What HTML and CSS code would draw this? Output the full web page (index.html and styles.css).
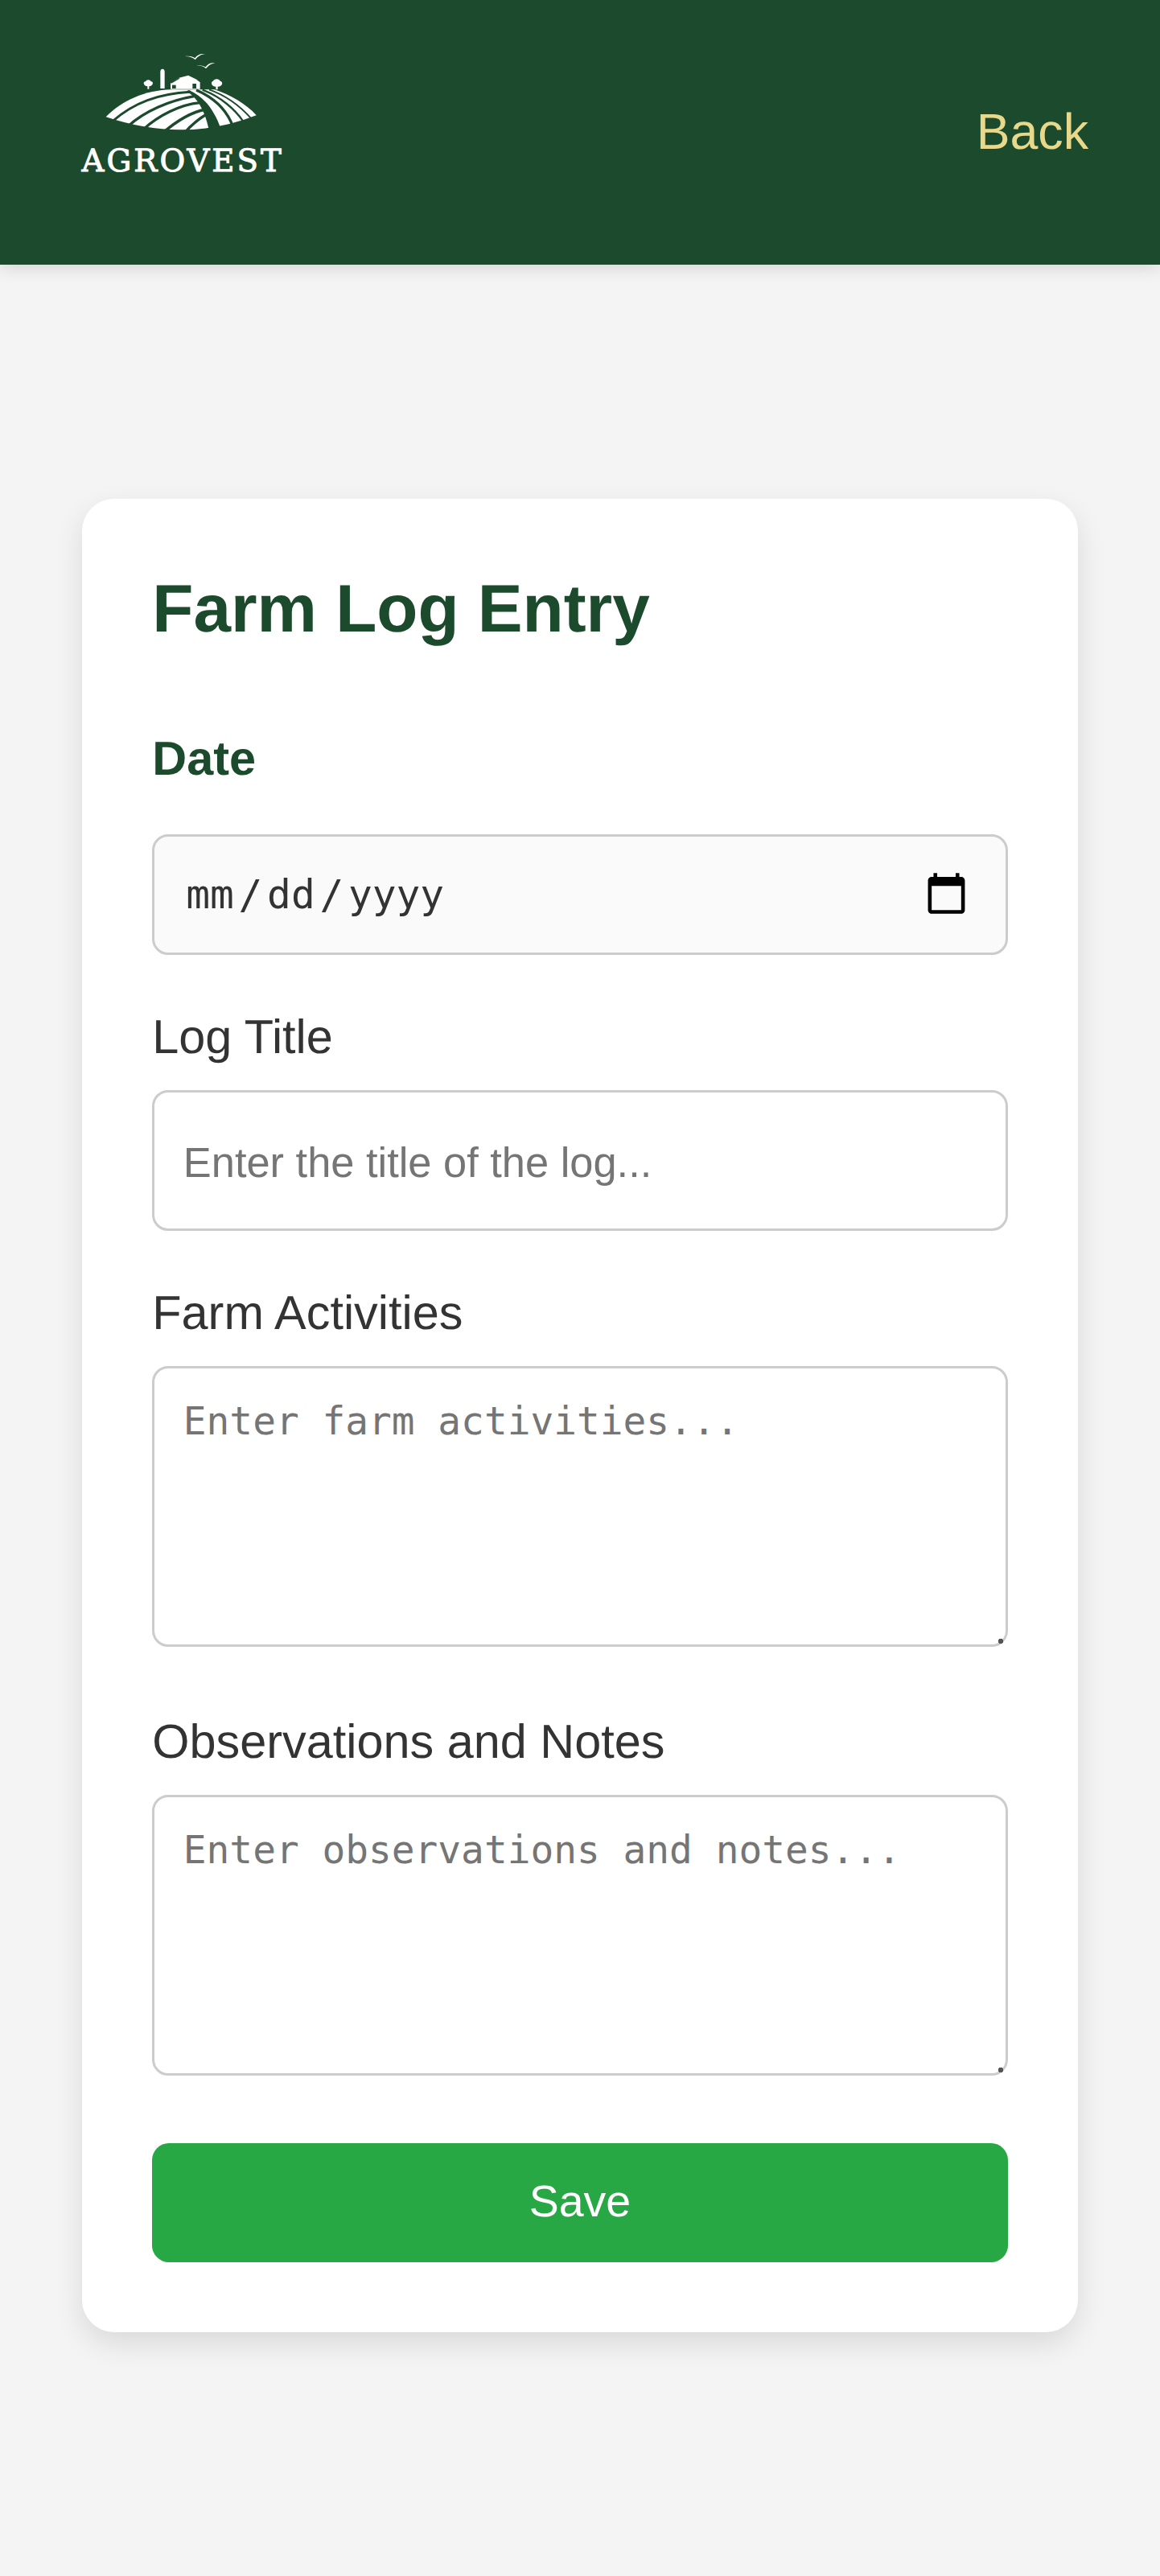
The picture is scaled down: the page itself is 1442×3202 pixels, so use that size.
FILE: index.html
```html
<!DOCTYPE html>
<html lang="en">
<head>
<meta charset="utf-8">
<title>Farm Log Entry</title>
<link rel="stylesheet" href="styles.css">
</head>
<body>
<header class="topbar">
  <svg class="logo" viewBox="0 0 870 540" role="img" aria-label="Agrovest">
    <g fill="#fff">
      <path d="M155 286C215 225 300 186 400 184L560 184C620 205 675 235 716 280Q450 385 155 286Z"/>
      <path d="M358 180V118Q358 108 366 107Q374 108 374 118V180Z"/>
      <path d="M396 160L428 140L462 131L490 145L506 157V182H396Z"/>
      <path d="M310 182V172C294 172 292 153 303 154C306 146 320 146 323 154C334 153 332 172 316 172V182Z"/>
      <path d="M565 184V173C548 173 544 154 555 152C558 142 578 142 581 152C594 154 590 173 572 173V184Z"/>
      <path d="M450 60C470 58 480 62 487 67C495 54 510 48 526 52C510 52 498 60 488 73C480 65 468 60 450 60Z"/>
      <path d="M492 94C510 92 520 96 527 100C535 88 548 82 562 86C548 86 537 94 528 106C520 98 510 95 492 94Z"/>
    </g>
    <g fill="none" stroke="#1c4a2c">
      <path stroke-width="9" d="M180 302C260 232 350 200 470 193"/>
      <path stroke-width="10" d="M238 320C300 265 390 225 484 209"/>
      <path stroke-width="10" d="M295 332C350 282 430 240 506 233"/>
      <path stroke-width="11" d="M368 345C420 300 475 268 526 258"/>
      <path stroke-width="10" d="M448 345C478 312 505 290 534 274"/>
      <path stroke-width="10" d="M628 320C605 260 560 215 492 186"/>
      <path stroke-width="7" d="M668 304C635 255 580 210 515 185"/>
      <path stroke-width="6" d="M697 292C655 245 600 205 540 184"/>
    </g>
    <g fill="#1c4a2c">
      <path d="M455 190C490 210 525 255 541 345L585 335C560 260 520 210 465 186Z"/>
      <rect x="402" y="167" width="14" height="13"/>
      <rect x="478" y="162" width="14" height="18"/>
      <path d="M396 158L428 140L430 143L399 161Z"/>
    </g>
    <text class="logo-name" x="437" y="490" text-anchor="middle" textLength="745">AGROVEST</text>
  </svg>
  <a class="back" href="#">Back</a>
</header>
<main class="page">
  <form class="card">
    <h1 class="title">Farm Log Entry</h1>
    <label class="label label-strong" for="date">Date</label>
    <input class="field field-date" id="date" type="date">
    <label class="label" for="title">Log Title</label>
    <input class="field field-text" id="title" type="text" placeholder="Enter the title of the log...">
    <label class="label" for="activities">Farm Activities</label>
    <textarea class="field field-area" id="activities" placeholder="Enter farm activities..."></textarea>
    <label class="label" for="notes">Observations and Notes</label>
    <textarea class="field field-area" id="notes" placeholder="Enter observations and notes..."></textarea>
    <button class="save" type="button">Save</button>
  </form>
</main>
</body>
</html>
```
FILE: styles.css
```css
* { box-sizing: border-box; }
html, body { margin: 0; padding: 0; }
body {
  min-height: 3202px;
  background: #f4f4f4;
  font-family: "Liberation Sans", Arial, sans-serif;
  color: #333;
  text-rendering: geometricPrecision;
}
.topbar {
  height: 329px;
  background: #1c4a2c;
  display: flex;
  align-items: flex-start;
  justify-content: space-between;
  padding: 50px 89px 0 80px;
  box-shadow: 0 4px 20px rgba(0, 0, 0, 0.13);
}
.logo { width: 290px; height: 180px; display: block; flex: none; }
.logo-name {
  font-family: "DejaVu Serif", serif;
  font-size: 116px;
  fill: #fff;
  stroke: #fff;
  stroke-width: 3px;
}
.back {
  margin-top: 80px;
  color: #e8d88c;
  font-size: 62.7px;
  text-decoration: none;
  line-height: 68px;
}
.page { padding: 291px 102px 0; }
.card {
  display: flex;
  flex-direction: column;
  background: #fff;
  border-radius: 40px;
  padding: 88px 87.3px 87.3px;
  box-shadow: 0 14px 36px rgba(0, 0, 0, 0.11);
}
.title {
  margin: 0 0 105px;
  font-size: 83.7px;
  line-height: 96px;
  color: #1c4a2c;
}
.label { font-size: 59.4px; line-height: 68px; margin-bottom: 32px; }
.label-strong { font-weight: 700; color: #1c4a2c; margin-bottom: 60px; }
.field {
  display: block;
  width: 100%;
  border: 3px solid #ccc;
  border-radius: 20px;
  padding: 0 35.5px;
  margin-bottom: 68px;
  color: #333;
}
.field-date {
  height: 150px;
  padding-left: 33.3px;
  background: #fafafa;
  font-family: "DejaVu Sans Mono", monospace;
  font-size: 49.5px;
}
.field-date::-webkit-datetime-edit-month-field,
.field-date::-webkit-datetime-edit-day-field,
.field-date::-webkit-datetime-edit-year-field { padding: 0 5.7px; }
.field-date::-webkit-calendar-picker-indicator {
  width: 59px;
  height: 59px;
  padding: 0;
  margin-right: 8.5px;
}
.field-text {
  height: 175px;
  padding-top: 4px;
  background: #fff;
  font-family: "Liberation Sans", Arial, sans-serif;
  font-size: 52.4px;
}
.field-area {
  height: 349px;
  padding: 37.5px 35.5px 35.5px;
  background: #fff;
  font-family: "DejaVu Sans Mono", monospace;
  font-size: 47.8px;
  margin-bottom: 84px;
}
.field-area::-webkit-resizer {
  background: radial-gradient(circle at 9px 11px, #555 0 3px, transparent 3.5px);
}
.save {
  height: 148px;
  border: 0;
  padding: 0 0 5px;
  border-radius: 21px;
  background: #28a745;
  color: #fff;
  font-family: "Liberation Sans", Arial, sans-serif;
  font-size: 55.5px;
}
```
